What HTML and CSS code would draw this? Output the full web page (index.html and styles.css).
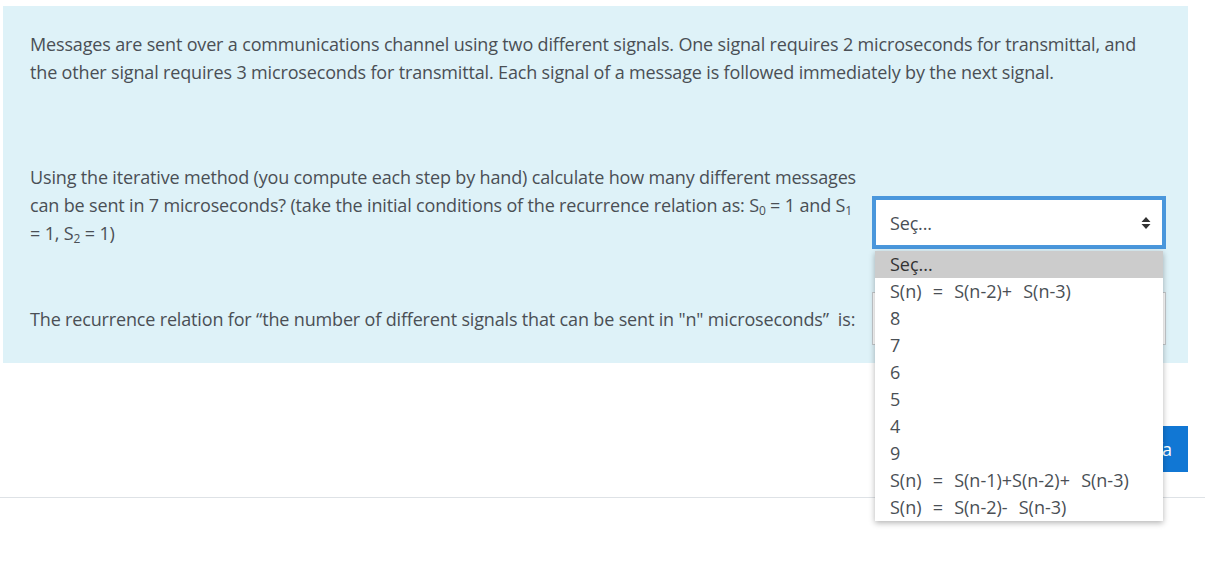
FILE: index.html
```html
<!DOCTYPE html>
<html lang="en">
<head>
<meta charset="utf-8">
<title>Question</title>
<link rel="stylesheet" href="styles.css">
</head>
<body>
<div class="page">
  <div class="formulation">
    <p class="intro">Messages are sent over a communications channel using two different signals. One signal requires 2 microseconds for transmittal, and the other signal requires 3 microseconds for transmittal. Each signal of a message is followed immediately by the next signal.</p>
    <div class="answer">
      <div class="qtext">Using the iterative method (you compute each step by hand) calculate how many different messages can be sent in 7 microseconds? (take the initial conditions of the recurrence relation as: S<sub>0</sub> = 1 and S<sub>1</sub> = 1, S<sub>2</sub> = 1)</div>
      <div class="control first">
        <div class="select focused">
          <span>Seç...</span>
          <svg class="arrows" width="10" height="14" viewBox="0 0 10 14"><path d="M5 1 L9.5 6 L0.5 6 Z M5 13 L9.5 8 L0.5 8 Z" fill="#333"/></svg>
        </div>
        <ul class="menu">
          <li class="active">Seç...</li>
          <li>S(n) = S(n-2)+ S(n-3)</li>
          <li>8</li>
          <li>7</li>
          <li>6</li>
          <li>5</li>
          <li>4</li>
          <li>9</li>
          <li>S(n) = S(n-1)+S(n-2)+ S(n-3)</li>
          <li>S(n) = S(n-2)- S(n-3)</li>
        </ul>
      </div>
      <div class="qtext second">The recurrence relation for “the number of different signals that can be sent in "n" microseconds”&nbsp; is:</div>
      <div class="control second">
        <div class="select">
          <span class="hidden-value">Seç...</span>
          <svg class="arrows" width="10" height="14" viewBox="0 0 10 14"><path d="M5 1 L9.5 6 L0.5 6 Z M5 13 L9.5 8 L0.5 8 Z" fill="#333"/></svg>
        </div>
      </div>
    </div>
  </div>
  <div class="nav">
    <button class="btn">Sonraki sayfa</button>
  </div>
</div>
<hr class="rule">
</body>
</html>
```
FILE: styles.css
```css
html, body {
  margin: 0;
  padding: 0;
  background: #fff;
}
body {
  min-height: 567px;
  font-family: "Open Sans", "Noto Sans", sans-serif;
  font-size: 18px;
  letter-spacing: -0.16px;
  color: #4a4f55;
}
.page {
  padding: 6px 17px 0 3px;
}
.formulation {
  background: #def2f8;
  padding: 24px 22px 18px 27px;
}
.intro {
  margin: 0;
  line-height: 28px;
}
.answer {
  margin-top: 77px;
  display: grid;
  grid-template-columns: 830px 294px;
  column-gap: 12px;
  row-gap: 45px;
  line-height: 28px;
}
.qtext sub {
  font-size: 12px;
  line-height: 0;
  vertical-align: -3px;
}
.qtext.second {
  align-self: center;
}
.control {
  position: relative;
  z-index: 5;
}
.control.first {
  align-self: end;
  margin-bottom: -2px;
  z-index: 10;
}
.control.second {
  align-self: center;
}
.select {
  box-sizing: border-box;
  height: 53px;
  border: 1px solid #c5c9cc;
  background: #fff;
  display: flex;
  align-items: center;
  justify-content: space-between;
  padding: 0 14px 0 17px;
}
.select.focused {
  border: 4px solid #4a97dc;
  padding: 0 11px 0 14px;
}
.hidden-value {
  visibility: hidden;
}
.arrows {
  display: block;
}
.menu {
  position: absolute;
  left: 3px;
  top: 55px;
  width: 288px;
  margin: 0;
  padding: 0;
  list-style: none;
  background: #fff;
  box-shadow: 0 2px 6px rgba(0,0,0,0.3);
  z-index: 20;
}
.menu li {
  height: 27px;
  line-height: 27px;
  padding-left: 15px;
  letter-spacing: 0;
  word-spacing: 6.5px;
}
.menu li.active {
  background: #cccccc;
  color: #333;
}
.nav {
  display: flex;
  justify-content: flex-end;
  margin-top: 63px;
}
.btn {
  font-family: inherit;
  font-size: 18px;
  height: 46px;
  padding: 0 16px;
  background: #1177d4;
  color: #fff;
  border: 0;
}
.rule {
  margin: 25px 0 0 0;
  border: 0;
  border-top: 1px solid #dee2e6;
}
```
